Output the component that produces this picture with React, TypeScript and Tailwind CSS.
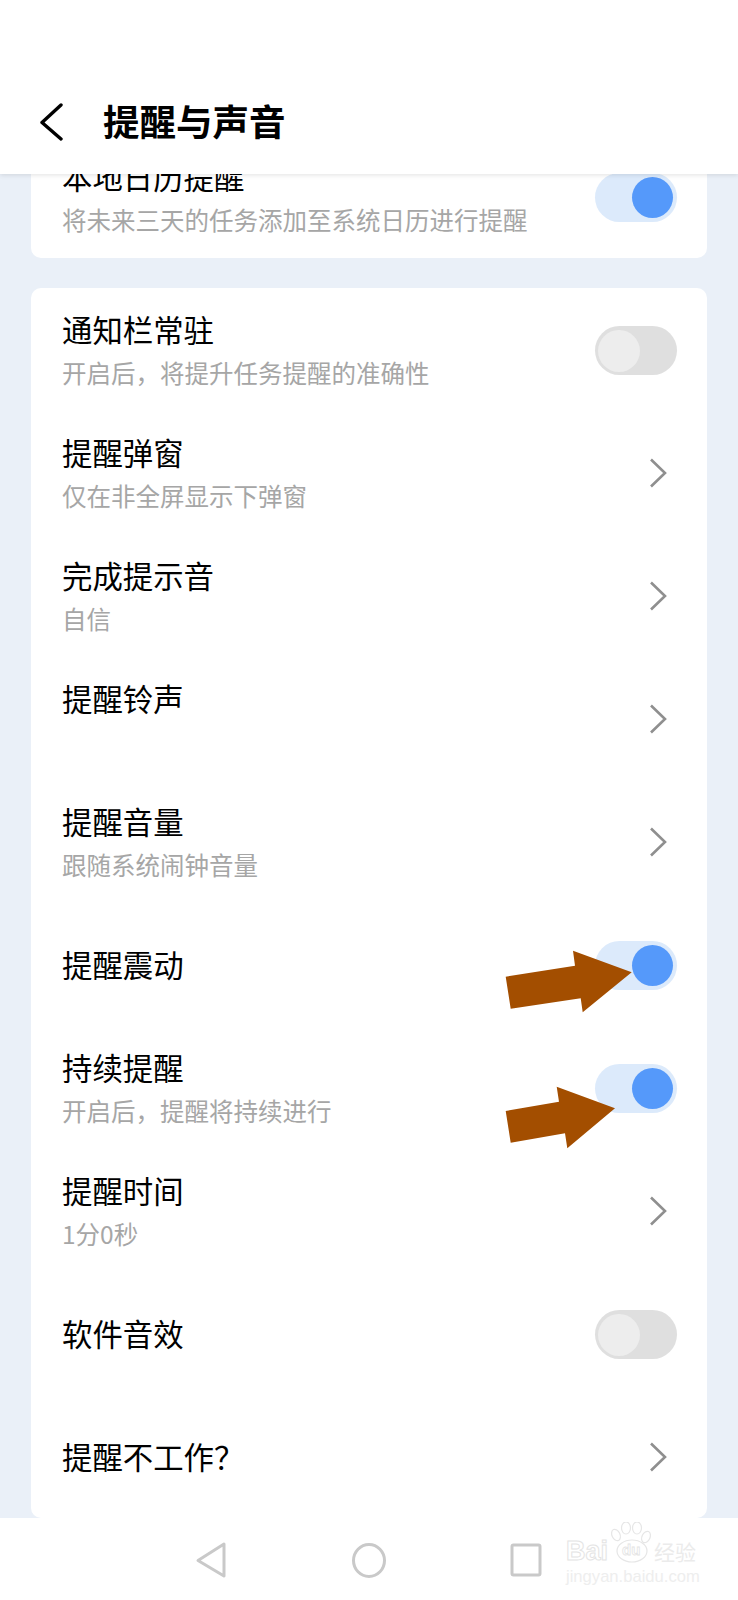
type Row = {
  title: string;
  sub?: string;
  toggle?: 'on' | 'off';
};

const rows: Row[] = [
  { title: '通知栏常驻', sub: '开启后，将提升任务提醒的准确性', toggle: 'off' },
  { title: '提醒弹窗', sub: '仅在非全屏显示下弹窗' },
  { title: '完成提示音', sub: '自信' },
  { title: '提醒铃声', sub: '' },
  { title: '提醒音量', sub: '跟随系统闹钟音量' },
  { title: '提醒震动', toggle: 'on' },
  { title: '持续提醒', sub: '开启后，提醒将持续进行', toggle: 'on' },
  { title: '提醒时间', sub: '1分0秒' },
  { title: '软件音效', toggle: 'off' },
  { title: '提醒不工作？' },
];

const Toggle = ({ on }: { on: boolean }) =>
  on ? (
    <div className="mt-[2px] -mr-[1px] flex h-[49px] w-[82px] items-center justify-end rounded-full bg-[#dceafb] pr-[4px]">
      <div className="h-[41px] w-[41px] rounded-full bg-[#5599fa]" />
    </div>
  ) : (
    <div className="mt-[2px] -mr-[1px] flex h-[49px] w-[82px] items-center rounded-full bg-[#dfdfdf] pl-[3px]">
      <div className="h-[42px] w-[42px] rounded-full bg-[#ededed]" />
    </div>
  );

const Chevron = () => (
  <svg width="18" height="30" viewBox="0 0 18 30" fill="none" className="mr-[9px]">
    <path d="M2 1.5 L16 15 L2 28.5" stroke="#8f8f8f" strokeWidth="2.6" />
  </svg>
);

const SettingRow = ({ title, sub, toggle }: Row) => (
  <div className="flex h-[123px] items-center justify-between px-[31px]">
    <div className={sub === undefined ? 'pb-[1px]' : ''}>
      <div className="text-[30.4px] leading-[38px] text-black">{title}</div>
      {sub !== undefined && (
        <div className="mt-[9px] h-[33px] text-[24.5px] leading-[32px] text-[#a6a6a6]">{sub}</div>
      )}
    </div>
    {toggle ? <Toggle on={toggle === 'on'} /> : <Chevron />}
  </div>
);

const Watermark = () => (
  <div className="absolute left-[566px] top-[4px] text-white">
    <div className="flex h-[44px] items-center pt-[14px]">
      <span className="w-[44px] text-[27px] leading-[30px] font-bold [-webkit-text-stroke:1px_#e4e4e4]" style={{ fontFamily: '"Liberation Sans", sans-serif' }}>
        Bai
      </span>
      <div className="relative -mt-[14px] h-[44px] w-[44px]">
        <svg width="44" height="44" viewBox="0 0 44 44" fill="none" stroke="#e6e6e6" strokeWidth="1.2">
          <ellipse cx="6" cy="13" rx="4" ry="6" transform="rotate(-25 6 13)" />
          <ellipse cx="16" cy="6" rx="4.5" ry="6" />
          <ellipse cx="27" cy="6" rx="4.5" ry="6" />
          <ellipse cx="36" cy="15" rx="4" ry="6" transform="rotate(25 36 15)" />
          <ellipse cx="22" cy="29" rx="15" ry="11" />
        </svg>
        <span className="absolute left-[12px] top-[17px] text-[15px] leading-[22px] font-bold [-webkit-text-stroke:0.8px_#e4e4e4]" style={{ fontFamily: '"Liberation Sans", sans-serif' }}>
          du
        </span>
      </div>
      <span className="text-[21px] leading-[30px] text-[#ebebeb]">经验</span>
    </div>
    <div className="mt-[1px] text-[16.6px] leading-[20px] text-[#eeeeee]" style={{ fontFamily: '"Liberation Sans", sans-serif' }}>
      jingyan.baidu.com
    </div>
  </div>
);

const App = () => {
  return (
    <div
      className="relative flex h-[1600px] w-[738px] flex-col overflow-hidden bg-[#eaf0f8]"
      style={{ fontFamily: '"Noto Sans CJK SC", "Liberation Sans", sans-serif' }}
    >
      <header className="relative z-10 flex h-[174px] shrink-0 items-end bg-white pb-[29px] pl-[39px] shadow-[0_1px_5px_rgba(0,0,0,0.12)]">
        <svg width="24" height="38" viewBox="0 0 24 38" fill="none" className="mb-[4px]">
          <path d="M22 2 L3 19.5 L22 36" stroke="#000" strokeWidth="3.4" strokeLinecap="round" strokeLinejoin="round" />
        </svg>
        <h1 className="ml-[40px] text-[36.5px] leading-[48px] font-bold text-black">提醒与声音</h1>
      </header>

      <main className="flex-1 overflow-hidden px-[31px]">
        <div className="mt-[-39px] rounded-[10px] bg-white">
          <SettingRow title="本地日历提醒" sub="将未来三天的任务添加至系统日历进行提醒" toggle="on" />
        </div>
        <div className="mt-[30px] rounded-[10px] bg-white">
          {rows.map((r) => (
            <SettingRow key={r.title} {...r} />
          ))}
        </div>
      </main>

      <nav className="relative flex h-[82px] shrink-0 bg-white">
        <svg width="738" height="82" viewBox="0 0 738 82" fill="none" stroke="#c9c9c9" strokeWidth="3">
          <path d="M224 26 L198 42.5 L224 58 Z" strokeLinejoin="round" />
          <ellipse cx="369" cy="42.5" rx="15.5" ry="16" />
          <rect x="512" y="27" width="28" height="30" rx="1.5" />
        </svg>
        <Watermark />
      </nav>

      {/* annotation arrows */}
      <svg className="absolute left-0 top-0" width="738" height="1600" viewBox="0 0 738 1600">
        <polygon
          fill="#a34e00"
          points="505.7,976.7 575,965.7 573,950.7 631.7,972.3 582.7,1012.3 580.7,998.3 510.7,1008.7"
        />
        <polygon
          fill="#a34e00"
          points="505.7,1111 559,1101.7 556.7,1086.7 615,1108.3 567.3,1148.3 565,1133.3 510.7,1142.7"
        />
      </svg>
    </div>
  );
};

export default App;
